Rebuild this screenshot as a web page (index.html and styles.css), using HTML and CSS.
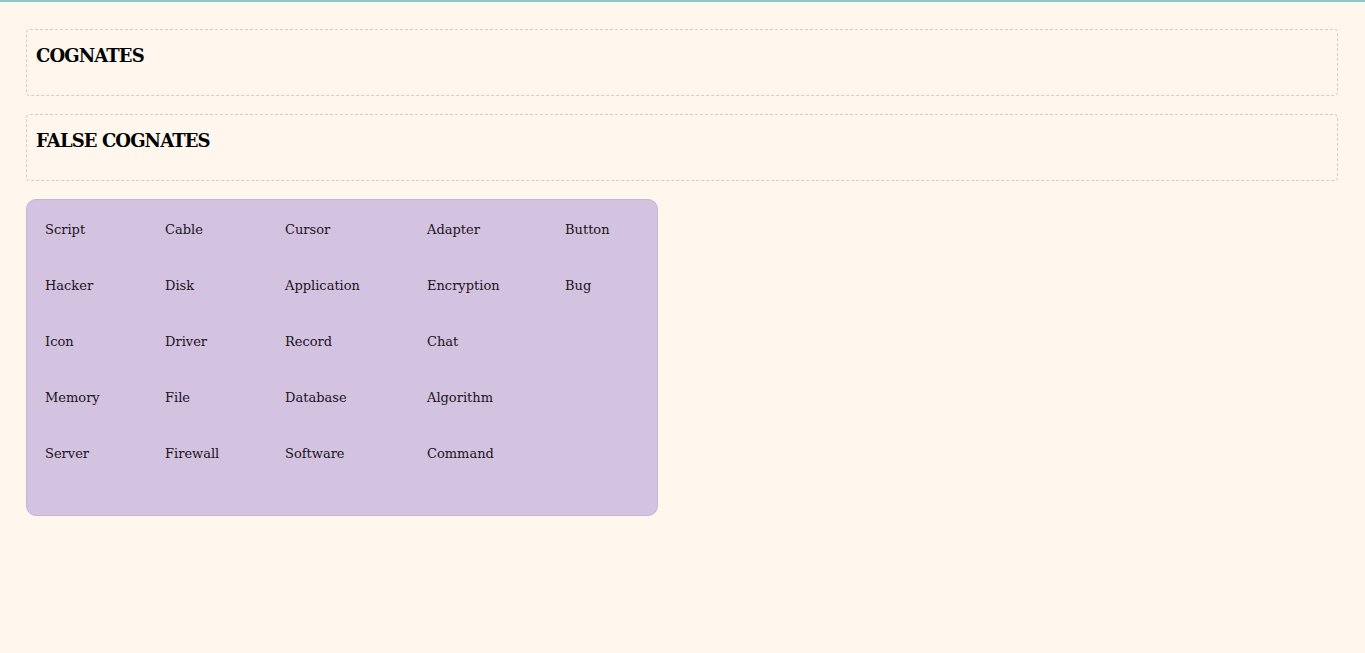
FILE: index.html
```html
<!DOCTYPE html>
<html lang="en">
<head>
<meta charset="utf-8">
<title>Cognates</title>
<link rel="stylesheet" href="styles.css">
</head>
<body>
<div class="topline"></div>
<main class="page">
  <section class="zone">
    <h2 class="zone-title">COGNATES</h2>
  </section>
  <section class="zone">
    <h2 class="zone-title">FALSE COGNATES</h2>
  </section>
  <div class="bank">
    <span class="word">Script</span><span class="word">Cable</span><span class="word">Cursor</span><span class="word">Adapter</span><span class="word">Button</span>
    <span class="word">Hacker</span><span class="word">Disk</span><span class="word">Application</span><span class="word">Encryption</span><span class="word">Bug</span>
    <span class="word">Icon</span><span class="word">Driver</span><span class="word">Record</span><span class="word">Chat</span><span class="word"></span>
    <span class="word">Memory</span><span class="word">File</span><span class="word">Database</span><span class="word">Algorithm</span><span class="word"></span>
    <span class="word">Server</span><span class="word">Firewall</span><span class="word">Software</span><span class="word">Command</span><span class="word"></span>
  </div>
</main>
</body>
</html>
```
FILE: styles.css
```css
html, body {
  margin: 0;
  padding: 0;
  background: #fff7ed;
}
body {
  font-family: "DejaVu Serif", "Liberation Serif", serif;
  color: #1b1320;
  height: 653px;
  overflow: hidden;
}
.topline {
  height: 2px;
  background: #8ec6c8;
}
.page {
  padding: 27px 27px 0 26px;
  display: flex;
  flex-direction: column;
  gap: 18px;
  align-items: flex-start;
}
.zone {
  align-self: stretch;
  height: 65px;
  border: 1px dashed #cfcfc4;
  border-radius: 4px;
  padding: 0 9px;
}
.zone-title {
  margin: 14px 0 0;
  font-size: 18px;
  line-height: 24px;
  font-weight: bold;
  color: #000;
  letter-spacing: -0.9px;
}
.bank {
  width: 612px;
  height: 281px;
  padding: 1px 0 33px 18px;
  background: #d3c2e0;
  border: 1px solid #c7b6d3;
  border-radius: 10px;
  display: grid;
  grid-template-columns: 120px 120px 142px 138px 1fr;
  grid-auto-rows: 56px;
}
.word {
  display: flex;
  align-items: center;
  font-size: 13px;
  color: #1b1320;
}
```
